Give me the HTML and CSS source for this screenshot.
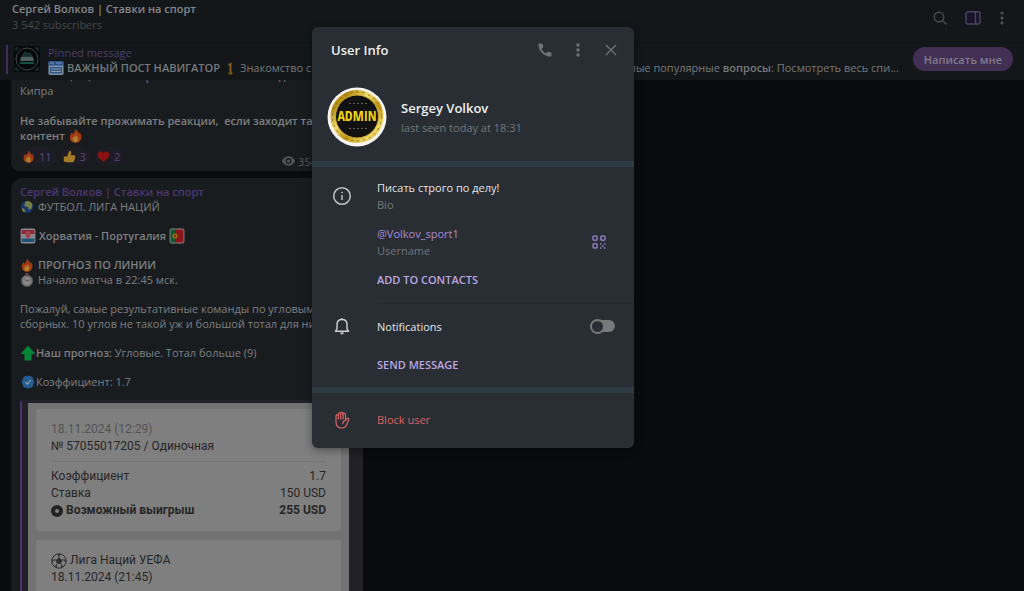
FILE: index.html
```
<!DOCTYPE html>
<html lang="ru">
<head>
<meta charset="utf-8">
<meta name="viewport" content="width=device-width, initial-scale=1">
<title>Сергей Волков | Ставки на спорт</title>
<link rel="stylesheet" href="styles.css">
</head>
<body>
<svg class="defs" aria-hidden="true">
  <defs>
    <symbol id="fire" viewBox="0 0 16 16">
      <path fill="#a33a16" d="M8 0.6c.8 2 3.200 3 4 5.600.3-.5.5-1 .6-1.500C14.600 7 15 11 13 13.500 11.500 15.300 9.800 15.800 8 15.800c-3.500 0-6-2.300-6-5.800C2 7.800 3.300 6.200 4 4.600c.7.6 1 1.200 1.200 2C6.600 5 8 3 8 .6z"/>
      <path fill="#a9822a" d="M8.200 6.500c.3 1.700 2.600 2.800 2.600 5.400 0 2-1.200 3.200-2.900 3.200s-3-1.200-3-3c0-1.500.7-2.200 1.200-3.100.4.4.6.8.7 1.300.9-1 1.400-2.200 1.400-3.800z"/>
    </symbol>
  </defs>
</svg>
<div class="app">
  <header class="topbar">
    <div class="topbar-title">
      <h1 class="chat-name">Сергей Волков | Ставки на спорт</h1>
      <p class="chat-sub">3 542 subscribers</p>
    </div>
    <div class="topbar-tools">
      <button class="tool" aria-label="Search"><svg width="16" height="16" viewBox="0 0 16 16" fill="none" stroke="#484b4e" stroke-width="1.400"><circle cx="7" cy="7" r="4.800"/><path d="M10.500 10.500l4 4"/></svg></button>
      <button class="tool" aria-label="Side panel"><svg width="16" height="16" viewBox="0 0 16 16"><rect x="1" y="1.700" width="14" height="12.300" rx="2" fill="#17132a" stroke="#4c4562" stroke-width="1.400"/><path d="M10.500 2v12" stroke="#4c4562" stroke-width="1.400"/></svg></button>
      <button class="tool" aria-label="More"><svg width="8" height="16" viewBox="0 0 8 16" fill="#505356"><circle cx="4" cy="3" r="1.500"/><circle cx="4" cy="8" r="1.500"/><circle cx="4" cy="13" r="1.500"/></svg></button>
    </div>
  </header>

  <section class="pinned" aria-label="Pinned message">
    <svg class="pin-thumb" width="26" height="26" viewBox="0 0 26 26">
      <rect width="26" height="26" rx="2" fill="#05090a"/>
      <circle cx="13" cy="13" r="11" fill="none" stroke="#3c4548" stroke-width="1"/>
      <path d="M2 5V2h3M21 2h3v3M2 21v3h3M21 24h3v-3" fill="none" stroke="#17463c" stroke-width="1.200"/>
      <path d="M8 11l3-5 3 2 2-1 2 4z" fill="#152b2d" stroke="#2a4b4a" stroke-width=".8"/>
      <path d="M6 15l1-4h12l1 4z" fill="#515f62"/>
      <path d="M6 17h14" stroke="#176352" stroke-width="1.600"/>
    </svg>
    <div class="pin-body">
      <p class="pin-title">Pinned message</p>
      <div class="pin-line">
        <p class="pin-part pin-start">
          <svg class="emoji" width="16" height="16" viewBox="0 0 16 16"><rect x=".5" y="1" width="15" height="14" rx="1.500" fill="#7f90a3"/><rect x=".5" y="1" width="15" height="4.500" rx="1" fill="#29538d"/><path d="M2 3h4M8 3h6" stroke="#8295aa"/><rect x="2" y="7" width="12" height="6.500" fill="#30588b"/><path d="M3 9h10M3 11.500h10" stroke="#8d98a4"/></svg>
          <b>ВАЖНЫЙ ПОСТ НАВИГАТОР</b>
          <svg class="emoji" width="14" height="14" viewBox="0 0 14 14"><path d="M5.500 4.200l2-1.200v9.500M5.500 12.500h4" fill="none" stroke="#81571b" stroke-width="2"/></svg>
          <span>Знакомство с</span>
        </p>
        <p class="pin-part pin-end">самые популярные <b>вопросы</b>: Посмотреть весь спи...</p>
      </div>
    </div>
    <button class="write-btn">Написать мне</button>
  </section>

  <main class="chat">
    <article class="bubble bubble-first">
      <p class="cut">ли Тотал (2.5) Больше проставить в 1 на П. Победа<br>Кипра</p>
      <p class="strong">Не забывайте прожимать реакции,&nbsp; если заходит такой<br>контент <svg class="emoji" width="15" height="15"><use href="#fire"/></svg></p>
      <div class="reactions">
        <button class="reaction"><svg width="13" height="13"><use href="#fire"/></svg>11</button>
        <button class="reaction"><svg width="13" height="13" viewBox="0 0 16 16"><path fill="#a47c25" d="M1 8h4l3-7c2 0 2.600 1.500 2 3.500L9.500 6.500H14c1.500 0 1.500 2 .5 2.300.8.500.7 1.900-.3 2.200.5.700.2 1.700-.6 2 .2 1-.3 2-1.600 2H5.500L1 14z"/></svg>3</button>
        <button class="reaction"><svg width="13" height="13" viewBox="0 0 16 16"><path fill="#8c0f12" d="M8 14.500C3 11 .8 8.500.8 5.500.8 1.300 6 .5 8 4c2-3.500 7.200-2.700 7.200 1.500 0 3-2.200 5.500-7.200 9z"/></svg>2</button>
        <span class="views"><svg width="13" height="10" viewBox="0 0 14 10"><path fill="#55585b" d="M7 0C3.500 0 1.200 2.500 0 5c1.200 2.500 3.500 5 7 5s5.800-2.500 7-5C12.800 2.500 10.500 0 7 0z"/><circle cx="7" cy="5" r="3.200" fill="#191c1f"/><circle cx="7" cy="5" r="1.700" fill="#55585b"/></svg>3542 12:10</span>
      </div>
    </article>

    <article class="bubble bubble-post">
      <div class="post-text">
        <div>
          <h2 class="author">Сергей Волков | Ставки на спорт</h2>
          <p class="row"><svg class="emoji" width="14" height="14" viewBox="0 0 16 16"><circle cx="8" cy="8" r="7" fill="#17366c"/><path d="M6 2c3-2 7 0 8.500 3.500L13 10l-3 1-1-3-4-1zM2 9l3 1 1 4-3-1z" fill="#727f45"/></svg><span>ФУТБОЛ. ЛИГА НАЦИЙ</span></p>
        </div>
        <p class="row strong flags"><svg class="emoji" width="16" height="16" viewBox="0 0 16 16"><rect x=".6" y=".6" width="14.800" height="14.800" rx="2" fill="#888b8d"/><path d="M1.500 2h13v4h-13z" fill="#8a2733"/><path d="M1.500 10.500h13V14h-13z" fill="#1f527b"/><path d="M5.500 3.500h5v5L8 10.500l-2.500-2z" fill="#a3424a"/></svg><span>Хорватия - Португалия</span><svg class="emoji" width="16" height="16" viewBox="0 0 16 16"><rect x=".6" y=".6" width="14.800" height="14.800" rx="2" fill="#888b8d"/><path d="M1.500 1.500h5v13h-5z" fill="#14572c"/><path d="M6 1.500h8.500v13H6z" fill="#8b1519"/><circle cx="6" cy="8" r="2.600" fill="#8d7719"/><circle cx="6" cy="8" r="1.200" fill="#8b2c1d"/></svg></p>
        <div>
          <p class="row strong"><svg class="emoji" width="14" height="14"><use href="#fire"/></svg><span>ПРОГНОЗ ПО ЛИНИИ</span></p>
          <p class="row"><svg class="emoji" width="14" height="14" viewBox="0 0 16 16"><path d="M6 0h4v2H6z" fill="#7c3a39"/><circle cx="8" cy="9" r="6.600" fill="#6f6f70" stroke="#4d4f52"/><circle cx="8" cy="9" r="4.600" fill="#8a8586"/><path d="M8 9L5.500 7.500M8 9l3-1" stroke="#56494a"/></svg><span>Начало матча в 22:45 мск.</span></p>
        </div>
        <p>Пожалуй, самые результативные команды по угловым из<br>сборных. 10 углов не такой уж и большой тотал для них.</p>
        <p class="row tight"><svg class="emoji" width="16" height="16" viewBox="0 0 16 16"><path d="M8 .5L15.500 9H11.500v6.500h-7V9H.5z" fill="#058235"/></svg><span><b>Наш прогноз:</b> Угловые. Тотал больше (9)</span></p>
        <p class="row tight"><svg class="emoji" width="16" height="16" viewBox="0 0 16 16"><path d="M8 2l2 .8 2 .2.6 2L14 8l-1.400 3-.6 2-2 .2L8 14l-2-.8-2-.2-.6-2L2 8l1.400-3L4 3l2-.2z" fill="#235d91" stroke="#235d91"/><path d="M5.500 8l2 2 3.200-4" fill="none" stroke="#8d9eac" stroke-width="1.200"/></svg><span>Коэффициент: 1.7</span></p>
      </div>
      <div class="slip">
        <section class="ticket">
          <p class="ticket-date">18.11.2024 (12:29)</p>
          <p class="ticket-id">№ 57055017205 / Одиночная</p>
          <dl class="sums">
            <div class="sum"><dt>Коэффициент</dt><dd>1.7</dd></div>
            <div class="sum"><dt>Ставка</dt><dd>150 USD</dd></div>
            <div class="sum total"><dt><svg width="12" height="12" viewBox="0 0 12 12"><circle cx="6" cy="6" r="4" fill="none" stroke="#222" stroke-width="4"/></svg>Возможный выигрыш</dt><dd>255 USD</dd></div>
          </dl>
        </section>
        <section class="ticket">
          <p class="league"><svg width="16" height="16" viewBox="0 0 16 16"><circle cx="8" cy="8" r="7.200" fill="none" stroke="#2b2b2b"/><path d="M8 4.800l3.200 2.300L10 10.800H6L4.800 7.100zM5.500.9L8 2.400 10.500.9zM.8 6l1.900 1-.9 3zM15.200 6l-1.900 1 .9 3zM3.300 13l2.400-.5.6 2.500zM12.700 13l-2.400-.5-.6 2.500z" fill="#2b2b2b"/><path d="M8 2v3M2.500 7h2.500M13.500 7H11M6 10.800l-1 2M10 10.800l1 2" stroke="#2b2b2b"/></svg>Лига Наций УЕФА</p>
          <p>18.11.2024 (21:45)</p>
        </section>
      </div>
    </article>
  </main>

  <div class="dialog" role="dialog" aria-modal="true" aria-labelledby="dialog-title">
    <header class="dialog-head">
      <h2 class="dialog-title" id="dialog-title">User Info</h2>
      <button class="tool" aria-label="Call"><svg width="16" height="16" viewBox="0 0 16 16"><path fill="#6e7276" d="M4.700 1.600L2.500 1.500C1.700 1.500 1.300 2 1.400 2.900 1.900 9.200 6.800 14.100 13.100 14.600c.9.100 1.400-.3 1.400-1.100l-.1-2.200c0-.6-.4-1-.9-1.100l-2.200-.4c-.5-.1-.9 0-1.200.4l-1 1.200C7.100 10.400 5.600 8.900 4.600 6.900l1.200-1c.4-.3.5-.7.4-1.200l-.4-2.200c-.1-.5-.5-.9-1.100-.9z"/></svg></button>
      <button class="tool" aria-label="More options"><svg width="16" height="16" viewBox="0 0 16 16" fill="#6e7276"><circle cx="8" cy="3" r="1.700"/><circle cx="8" cy="8" r="1.700"/><circle cx="8" cy="13" r="1.700"/></svg></button>
      <button class="tool" aria-label="Close"><svg width="16" height="16" viewBox="0 0 16 16"><path d="M3 3l10 10M13 3L3 13" stroke="#6e7276" stroke-width="1.400"/></svg></button>
    </header>
    <section class="profile">
      <svg class="avatar" width="60" height="60" viewBox="0 0 60 60" role="img" aria-label="Admin">
        <defs><linearGradient id="gold" x1="0" y1="0" x2="1" y2="1"><stop offset="0" stop-color="#d9b42c"/><stop offset=".2" stop-color="#b48a13"/><stop offset=".4" stop-color="#f0df70"/><stop offset=".6" stop-color="#bd9315"/><stop offset=".8" stop-color="#ecd965"/><stop offset="1" stop-color="#b98d17"/></linearGradient></defs>
        <circle cx="30" cy="30" r="29.500" fill="#f6f5f2"/>
        <circle cx="30" cy="29.500" r="26.500" fill="url(#gold)"/>
        <circle cx="30" cy="29.500" r="24.500" fill="none" stroke="#8d6a10" stroke-width="1" stroke-dasharray="2 4"/>
        <circle cx="30" cy="29.500" r="21.500" fill="#101110" stroke="#d1ac2c"/>
        <path d="M22 16.500h18M22 41.500h18" stroke="#656150" stroke-dasharray="2 2"/>
        <text class="avatar-text" x="30" y="34" text-anchor="middle">ADMIN</text>
      </svg>
      <div class="profile-text">
        <h3 class="profile-name">Sergey Volkov</h3>
        <p class="muted">last seen today at 18:31</p>
      </div>
    </section>
    <section class="block info">
      <svg class="lead" width="20" height="20" viewBox="0 0 20 20" fill="none" stroke="#c3c5c7"><circle cx="10" cy="10" r="8.300" stroke-width="1.500"/><path d="M10 9v5" stroke-width="1.500"/><circle cx="10" cy="6.500" r=".6" fill="#c3c5c7" stroke-width=".6"/></svg>
      <div class="fields">
        <div class="field"><p>Писать строго по делу!</p><p class="muted">Bio</p></div>
        <div class="field user-field">
          <div><a class="handle" href="#">@Volkov_sport1</a><p class="muted">Username</p></div>
          <button class="tool" aria-label="QR code"><svg width="16" height="16" viewBox="0 0 16 16" fill="none" stroke="#8e78bd" stroke-width="1.500"><rect x="2" y="2" width="4.200" height="4.200" rx="1.200"/><rect x="9.800" y="2" width="4.200" height="4.200" rx="1.200"/><rect x="2" y="9.800" width="4.200" height="4.200" rx="1.200"/><path d="M9 10h1.500M13 10h1.500M11 12h1.800M9 14h1.500M13 14h1.500"/></svg></button>
        </div>
        <button class="action">ADD TO CONTACTS</button>
      </div>
    </section>
    <section class="block notify">
      <svg class="lead" width="20" height="20" viewBox="0 0 20 20" fill="none" stroke="#d0d2d4" stroke-width="1.400" stroke-linejoin="round"><path d="M3.500 15.200h13L15 12.800V8.500C15 5.500 13 3.500 10 3.500S5 5.500 5 8.500v4.300zM10 3.500V2"/><path d="M8.500 17.300h3" stroke-width="1.800"/></svg>
      <div class="fields">
        <label class="switch-row">Notifications<input class="switch" type="checkbox"></label>
        <button class="action">SEND MESSAGE</button>
      </div>
    </section>
    <section class="block danger">
      <svg class="lead" width="20" height="20" viewBox="0 0 20 20" fill="none" stroke="#dc6265" stroke-width="1.200" stroke-linecap="round" stroke-linejoin="round"><path d="M4 12V6c0-1.500 2.300-1.500 2.300 0V4c0-1.500 2.400-1.500 2.400 0V3.200c0-1.500 2.400-1.500 2.400 0V4.500c0-1.500 2.400-1.500 2.400 0V10.500l1-1.500c.9-1.300 2.900-.6 2.200.9l-2.200 5C13.300 17.300 12 18 10 18c-3.800 0-6-2-6-6z"/><path d="M6.300 6v3M8.700 4v5M11.100 4v5M13.500 10.500c-2 .5-2.800 1.700-2.800 3.200"/></svg>
      <button class="block-btn">Block user</button>
    </section>
  </div>
</div>
</body>
</html>
```

FILE: styles.css
```
* { box-sizing: border-box; }
body, h1, h2, h3, p, dl, dd { margin: 0; }
body {
  background: #0a0b0d;
  color: #7d7f81;
  font: 11px/15px "Open Sans", "Noto Sans", sans-serif;
}
button {
  border: 0;
  padding: 0;
  background: none;
  color: inherit;
  font: inherit;
  text-align: left;
}
b, .strong { font-weight: 600; }
.defs { position: absolute; width: 0; height: 0; }
.app {
  position: relative;
  display: flex;
  flex-direction: column;
  height: 100vh;
  overflow: hidden;
}
.emoji { flex: none; vertical-align: -3px; }
.tool { display: flex; flex: none; }

.topbar {
  display: flex;
  flex: none;
  justify-content: space-between;
  height: 42px;
  padding: 1px 18px 0 12px;
  background: #13171a;
}
.chat-name { color: #85878a; font-size: 11px; font-weight: 600; line-height: 16px; }
.chat-sub { color: #44474a; line-height: 16px; }
.topbar-tools { display: flex; align-items: center; gap: 17px; padding-bottom: 8px; }

.pinned {
  display: flex;
  flex: none;
  align-items: flex-start;
  gap: 8px;
  height: 38px;
  padding: 2px 11px 0 6px;
  border-top: 1px solid #111417;
  background: #13171a;
}
.pin-thumb {
  flex: none;
  box-sizing: content-box;
  padding: 1px 0 2px 6px;
  border-left: 2px solid #3c2e58;
}
.pin-body { flex: 1; min-width: 0; }
.pin-title { color: #4c3d6d; }
.pin-line { display: flex; justify-content: space-between; color: #77797b; }
.pin-part { display: flex; align-items: center; gap: 3px; height: 15px; white-space: pre; }
.pin-end { display: block; margin-right: 6px; }
.write-btn {
  flex: none;
  height: 24px;
  margin-top: 2px;
  padding: 0 11px;
  border-radius: 12px;
  background: #412f54;
  color: #827b8b;
  font-weight: 600;
}

.chat {
  display: flex;
  flex: 1;
  flex-direction: column;
  gap: 7px;
  min-height: 0;
  overflow: hidden;
  padding-left: 11px;
}
.bubble { flex: none; width: 352px; background: #191c1f; }
.bubble-first {
  margin-top: -12px;
  padding: 0 9px 6px;
  border-bottom-left-radius: 8px;
}
.cut { margin-bottom: 15px; white-space: nowrap; }
.reactions { display: flex; gap: 5px; margin-top: 4px; }
.reaction {
  display: flex;
  align-items: center;
  gap: 4px;
  height: 18px;
  padding: 0 4px 0 2px;
  border-radius: 9px;
  background: #1e1d26;
  color: #594879;
}
.views { display: flex; align-items: center; gap: 3px; margin: 6px 0 -4px auto; color: #55585b; }

.bubble-post { border-radius: 12px 12px 0 0; }
.post-text {
  display: flex;
  flex-direction: column;
  gap: 14px;
  padding: 6px 9px 11px;
  white-space: nowrap;
}
.author { color: #4e3671; font-size: 11px; font-weight: 600; line-height: 15px; }
.row { display: flex; align-items: center; gap: 4px; height: 15px; }
.row.flags { gap: 3px; }
.row.tight { gap: 0; }

.slip {
  display: flex;
  flex-direction: column;
  gap: 9px;
  margin-left: 9px;
  padding: 6px 22px 9px 8px;
  border: solid #222028;
  border-width: 3px 14px 0 0;
  border-left: 2px solid #4b356b;
  background: #737373;
  box-shadow: inset 6px 0 #222028;
  color: #262626;
  font: 12px/17px Roboto, sans-serif;
}
.ticket { margin: 0 -14px 0 6px; padding: 12px 15px; border-radius: 3px; background: #7f7f7f; }
.ticket-date { color: #535353; }
.ticket-id { padding-bottom: 6px; border-bottom: 1px solid #747474; }
.sums { padding-top: 6px; }
.sum { display: flex; justify-content: space-between; }
.total { font-weight: 700; }
.total dt { display: flex; align-items: center; gap: 3px; }
.league { display: flex; align-items: center; gap: 3px; }

.dialog {
  position: absolute;
  top: 27px;
  left: 312px;
  width: 322px;
  border-radius: 6px;
  background: #282e33;
  box-shadow: 0 2px 8px #0006;
  color: #e4e5e6;
}
.dialog-head { display: flex; align-items: center; gap: 17px; padding: 13px 15px 13px 19px; }
.dialog-title { flex: 1; color: #f0f0f1; font-size: 13px; font-weight: 600; line-height: 20px; }
.profile { display: flex; align-items: center; gap: 14px; padding: 14px 15px 14px; }
.avatar-text {
  fill: #f0d414;
  font: 700 14px "Liberation Sans Narrow", "Open Sans Condensed", "DejaVu Sans Condensed", sans-serif;
}
.profile-name { color: #f0f0f1; font-size: 13px; font-weight: 600; line-height: 20px; }
.profile-text { line-height: 20px; padding-top: 2px; }
.muted { color: #73777b; }
.block { display: flex; gap: 25px; padding: 0 0 0 20px; }
.lead { flex: none; }
.fields { flex: 1; }
.info { padding-top: 12px; border-top: 6px solid #303c44; }
.info .lead { margin-top: 7px; }
.field { margin-bottom: 12px; line-height: 17px; }
.user-field { display: flex; align-items: center; justify-content: space-between; padding-right: 27px; }
.handle { display: block; color: #a88bd9; text-decoration: none; }
.action { display: block; color: #bda6e3; font-weight: 600; line-height: 17px; }
.notify { padding-top: 12px; padding-bottom: 14px; }
.info .fields { padding-bottom: 15px; border-bottom: 1px solid #252a2f; }
.switch-row {
  display: flex;
  align-items: center;
  justify-content: space-between;
  height: 20px;
  margin-bottom: 20px;
  padding-right: 19px;
}
.switch {
  display: flex;
  align-items: center;
  width: 24px;
  height: 12px;
  margin: 0;
  border-radius: 6px;
  background: #77797b;
  appearance: none;
}
.switch::before {
  content: "";
  box-sizing: border-box;
  width: 15px;
  height: 15px;
  flex: none;
  margin-left: -1px;
  border: 2px solid #77797b;
  border-radius: 50%;
  background: #282e33;
}
.danger { align-items: center; padding-top: 17px; padding-bottom: 18px; border-top: 6px solid #303c44; }
.block-btn { color: #dc6265; line-height: 20px; }
```
